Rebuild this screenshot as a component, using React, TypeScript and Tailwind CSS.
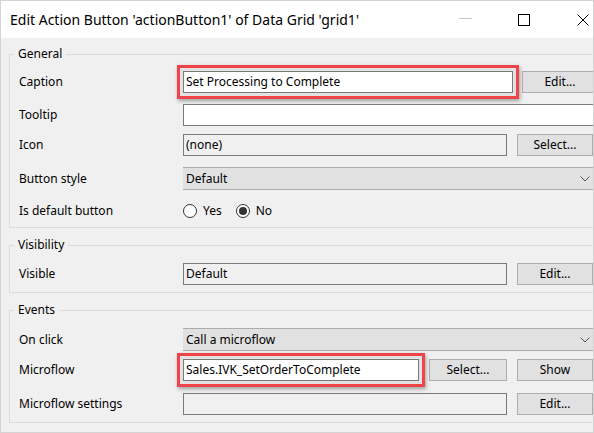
import type { ReactNode } from "react";

interface RowProps {
  label: string;
  className: string;
  children: ReactNode;
}

function Row({ label, className, children }: RowProps) {
  return (
    <div className={`flex items-center ${className}`}>
      <div className="w-[164px] shrink-0 text-black">{label}</div>
      {children}
    </div>
  );
}

interface GroupProps {
  title: string;
  className: string;
  children: ReactNode;
}

function Group({ title, className, children }: GroupProps) {
  return (
    <fieldset className={`w-[640px] border border-[#dcdcdc] ${className}`}>
      <legend className="ml-[4px] px-[4px] leading-[16px] text-black">{title}</legend>
      {children}
    </fieldset>
  );
}

function Button({ label, className = "w-[76px]" }: { label: string; className?: string }) {
  return (
    <div
      className={`flex h-[22px] shrink-0 items-center justify-center border border-[#adadad] bg-[#e1e1e1] text-black ${className}`}
    >
      {label}
    </div>
  );
}

function TextBox({ value = "", className, white = false }: { value?: string; className: string; white?: boolean }) {
  return (
    <div
      className={`flex h-[22px] shrink-0 items-center border border-[#7a7a7a] px-[2px] text-black ${
        white ? "bg-white" : "bg-[#f0f0f0]"
      } ${className}`}
    >
      {value}
    </div>
  );
}

function Highlight({ children }: { children: ReactNode }) {
  // red annotation box drawn round a field
  return (
    <div className="-m-[6px] mr-[3px] border-[3px] border-[#f0434a] bg-[#e2e2e2] p-[3px] shadow-[1px_2px_4px_rgba(0,0,0,0.35)]">
      {children}
    </div>
  );
}

function Dropdown({ value }: { value: string }) {
  return (
    <div className="flex h-[23px] w-[417px] shrink-0 items-center border-y border-[#acacac] bg-[#e1e1e1] pl-[3px] pr-[10px] text-black">
      <span>{value}</span>
      <svg className="ml-auto" width="10" height="6" viewBox="0 0 10 6">
        <path d="M0.5 0.5 L5 5 L9.5 0.5" fill="none" stroke="#555" strokeWidth="1" />
      </svg>
    </div>
  );
}

function Radio({ label, checked }: { label: string; checked?: boolean }) {
  return (
    <div className="flex items-center">
      <div className="flex h-[14px] w-[14px] items-center justify-center rounded-full border border-[#333] bg-white">
        {checked && <div className="h-[8px] w-[8px] rounded-full bg-[#333]" />}
      </div>
      <span className="ml-[6px]">{label}</span>
    </div>
  );
}

export default function App() {
  return (
    <div className="flex h-[433px] w-[594px] flex-col overflow-hidden border border-[#d4d4d4] bg-[#f0f0f0] font-['Noto_Sans',sans-serif] text-[12px]">
      {/* Title bar */}
      <div className="flex h-[37px] shrink-0 items-center bg-white pr-[4px]">
        <span className="pl-[9px] text-[14px] text-black">
          Edit Action Button 'actionButton1' of Data Grid 'grid1'
        </span>
        <div className="ml-auto flex items-center">
          <div className="-mt-[2px] h-px w-[13px] bg-[#c4c4c4]" />
          <div className="ml-[46px] h-[12px] w-[12px] border border-black" />
          <svg className="ml-[47px]" width="12" height="12" viewBox="0 0 12 12">
            <path d="M0.5 0.5 L11.5 11.5 M11.5 0.5 L0.5 11.5" stroke="#000" strokeWidth="1" />
          </svg>
        </div>
      </div>

      <div className="flex-1 overflow-hidden pl-[8px] pt-[8px]">
        <Group title="General" className="pb-[5px]">
          <div className="pl-[9px] pt-[9px]">
            <Row label="Caption" className="h-[22px]">
              <Highlight>
                <TextBox white value="Set Processing to Complete" className="w-[330px]" />
              </Highlight>
              <Button label="Edit..." />
            </Row>
            <Row label="Tooltip" className="mt-[11px] h-[22px]">
              <TextBox white className="w-[430px]" />
            </Row>
            <Row label="Icon" className="mt-[8px] h-[22px]">
              <TextBox value="(none)" className="w-[324px]" />
              <Button label="Select..." className="ml-[10px] w-[76px]" />
            </Row>
            <Row label="Button style" className="mt-[11px] h-[23px]">
              <Dropdown value="Default" />
            </Row>
            <Row label="Is default button" className="mt-[10px] h-[22px]">
              <div className="flex items-center gap-[14px] text-black">
                <Radio label="Yes" />
                <Radio label="No" checked />
              </div>
            </Row>
          </div>
        </Group>

        <Group title="Visibility" className="mt-[9px] pb-[7px]">
          <div className="pl-[9px] pt-[10px]">
            <Row label="Visible" className="h-[22px]">
              <TextBox value="Default" className="w-[324px]" />
              <Button label="Edit..." className="ml-[10px] w-[76px]" />
            </Row>
          </div>
        </Group>

        <Group title="Events" className="mt-[9px] pb-[7px]">
          <div className="pl-[9px] pt-[10px]">
            <Row label="On click" className="h-[23px]">
              <Dropdown value="Call a microflow" />
            </Row>
            <Row label="Microflow" className="mt-[8px] h-[22px]">
              <Highlight>
                <TextBox white value="Sales.IVK_SetOrderToComplete" className="w-[236px]" />
              </Highlight>
              <Button label="Select..." className="ml-[1px] w-[78px]" />
              <Button label="Show" className="ml-[10px] w-[76px]" />
            </Row>
            <Row label="Microflow settings" className="mt-[12px] h-[22px]">
              <TextBox className="w-[324px]" />
              <Button label="Edit..." className="ml-[10px] w-[76px]" />
            </Row>
          </div>
        </Group>
      </div>
    </div>
  );
}
